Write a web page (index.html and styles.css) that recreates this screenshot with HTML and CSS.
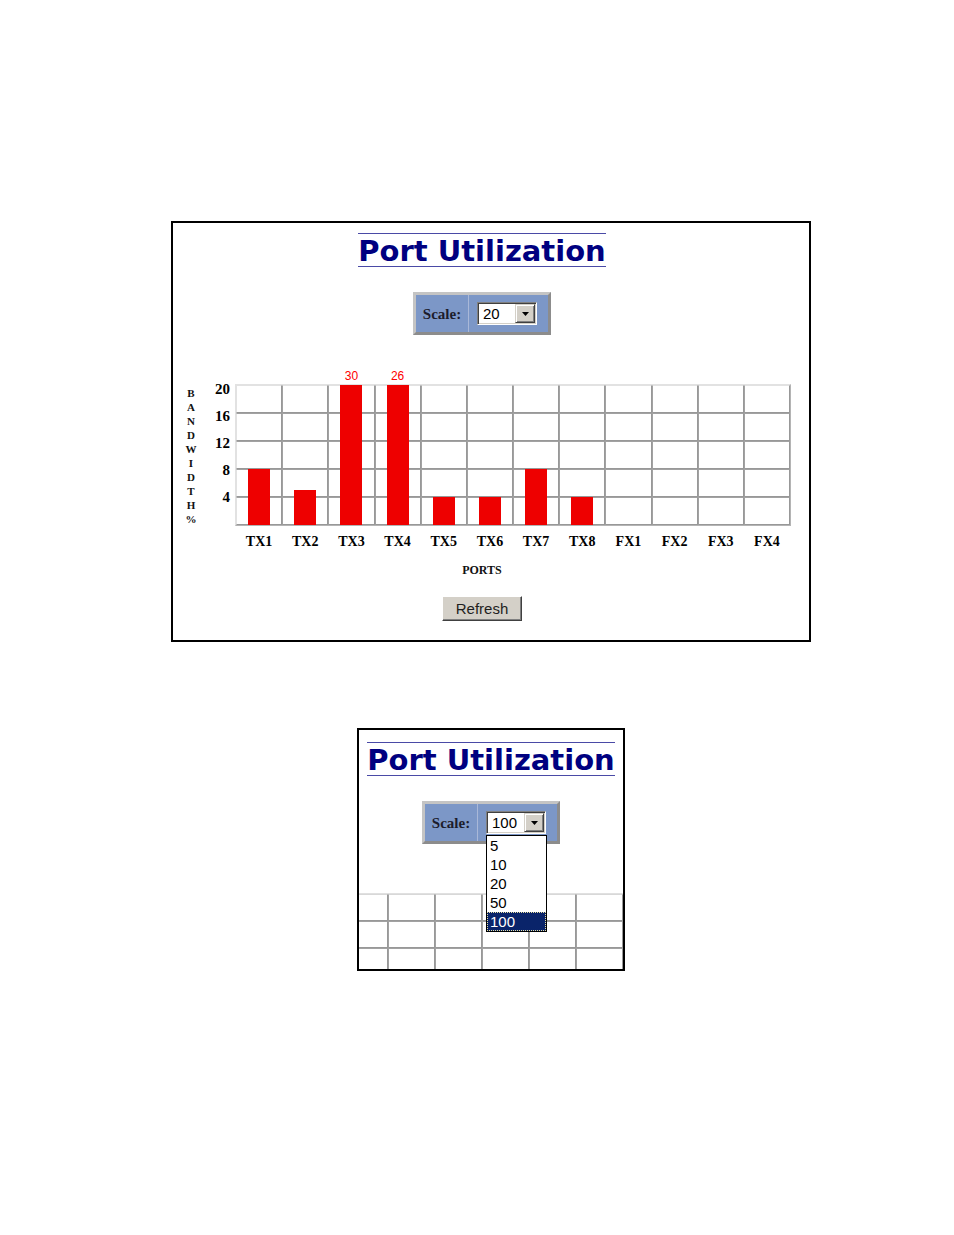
FILE: index.html
```html
<!DOCTYPE html>
<html lang="en">
<head>
<meta charset="utf-8">
<title>Port Utilization</title>
<link rel="stylesheet" href="styles.css">
</head>
<body>
<div class="page">
  <section class="panel panel-main">
    <div class="content">
      <h1 class="title"><span class="title-text">Port Utilization</span></h1>
      <div class="scale">
        <div class="scale-label">Scale:</div>
        <div class="scale-field">
          <div class="combo">
            <span class="combo-value">20</span>
            <span class="combo-btn"><svg width="7" height="4" viewBox="0 0 7 4"><polygon points="0,0 7,0 3.5,4" fill="#000"/></svg></span>
          </div>
        </div>
      </div>
      <div class="chart">
        <div class="values">
          <span></span><span></span><span>30</span><span>26</span><span></span><span></span>
          <span></span><span></span><span></span><span></span><span></span><span></span>
        </div>
        <div class="axis-title">
          <span>B</span><span>A</span><span>N</span><span>D</span><span>W</span><span>I</span><span>D</span><span>T</span><span>H</span><span>%</span>
        </div>
        <div class="ticks">
          <span>20</span><span>16</span><span>12</span><span>8</span><span>4</span>
        </div>
        <div class="plot">
          <div class="grid grid-main">
            <i></i><i></i><i></i><i></i><i></i><i></i><i></i><i></i><i></i><i></i><i></i><i></i>
            <i></i><i></i><i></i><i></i><i></i><i></i><i></i><i></i><i></i><i></i><i></i><i></i>
            <i></i><i></i><i></i><i></i><i></i><i></i><i></i><i></i><i></i><i></i><i></i><i></i>
            <i></i><i></i><i></i><i></i><i></i><i></i><i></i><i></i><i></i><i></i><i></i><i></i>
            <i></i><i></i><i></i><i></i><i></i><i></i><i></i><i></i><i></i><i></i><i></i><i></i>
          </div>
          <div class="bars">
            <span class="bar" style="height:56px"></span>
            <span class="bar" style="height:35px"></span>
            <span class="bar" style="height:140px"></span>
            <span class="bar" style="height:140px"></span>
            <span class="bar" style="height:28px"></span>
            <span class="bar" style="height:28px"></span>
            <span class="bar" style="height:56px"></span>
            <span class="bar" style="height:28px"></span>
            <span class="bar" style="height:0px"></span>
            <span class="bar" style="height:0px"></span>
            <span class="bar" style="height:0px"></span>
            <span class="bar" style="height:0px"></span>
          </div>
        </div>
        <div class="xlabels">
          <span>TX1</span><span>TX2</span><span>TX3</span><span>TX4</span><span>TX5</span><span>TX6</span>
          <span>TX7</span><span>TX8</span><span>FX1</span><span>FX2</span><span>FX3</span><span>FX4</span>
        </div>
      </div>
      <div class="ports">PORTS</div>
      <button class="btn" type="button">Refresh</button>
    </div>
  </section>

  <section class="panel panel-popup">
    <div class="content content-popup">
      <h1 class="title"><span class="title-text">Port Utilization</span></h1>
      <div class="scale">
        <div class="scale-label">Scale:</div>
        <div class="scale-field">
          <div class="combo">
            <span class="combo-value">100</span>
            <span class="combo-btn"><svg width="7" height="4" viewBox="0 0 7 4"><polygon points="0,0 7,0 3.5,4" fill="#000"/></svg></span>
            <ul class="listbox">
              <li>5</li>
              <li>10</li>
              <li>20</li>
              <li>50</li>
              <li class="selected">100</li>
            </ul>
          </div>
        </div>
      </div>
      <div class="grid grid-peek">
        <i></i><i></i><i></i><i></i><i></i><i></i>
        <i></i><i></i><i></i><i></i><i></i><i></i>
        <i></i><i></i><i></i><i></i><i></i><i></i>
      </div>
    </div>
  </section>
</div>
</body>
</html>
```

FILE: styles.css
```css
html, body {
  margin: 0;
  background: #fff;
}
body {
  font-family: "Liberation Serif", "Times New Roman", serif;
  color: #000;
  min-height: 1235px;
}
.page {
  padding-top: 221px;
}
.panel {
  box-sizing: border-box;
  border: 2px solid #000;
  background: #fff;
}
.panel-main {
  margin-left: 171px;
  width: 640px;
  height: 421px;
  padding-right: 18px;
}
.panel-popup {
  margin-left: 357px;
  margin-top: 86px;
  width: 268px;
  height: 243px;
  overflow: hidden;
}
.content {
  display: flex;
  flex-direction: column;
  align-items: center;
}
.title {
  margin: 10px 0 0;
  font: bold 29px/29px "DejaVu Sans", "Verdana", sans-serif;
  color: #000080;
}
.content-popup .title {
  margin-top: 12px;
}
.title-text {
  display: inline-block;
  padding-top: 3px;
  border-top: 1px solid #4a4aa6;
  border-bottom: 1px solid #4a4aa6;
}

/* scale control */
.scale {
  margin-top: 25px;
  display: flex;
  box-sizing: border-box;
  height: 43px;
  border: 3px solid;
  border-color: #c4c4c4 #8c8c8c #8c8c8c #c4c4c4;
  background: #7c97c7;
}
.scale-label {
  width: 52px;
  display: flex;
  align-items: center;
  justify-content: center;
  font: bold 15px/18px "Liberation Serif", serif;
  color: #1c1c2c;
  padding-top: 1px;
}
.scale-field {
  box-sizing: border-box;
  width: 80px;
  border-left: 1px solid #a9b8d8;
  padding: 7px 0 0 8px;
}
.combo {
  position: relative;
  box-sizing: border-box;
  width: 60px;
  height: 23px;
  display: flex;
  background: #fff;
  border: 1px solid;
  border-color: #808080 #ffffff #ffffff #808080;
  box-shadow: inset 1px 1px 0 #404040, inset -1px -1px 0 #d4d0c8;
  padding: 1px;
}
.combo-value {
  flex: 1;
  font: 15px/19px "Liberation Sans", Arial, sans-serif;
  padding-left: 4px;
  color: #000;
}
.combo-btn {
  box-sizing: border-box;
  width: 20px;
  height: 19px;
  background: #d4d0c8;
  border: 1px solid;
  border-color: #d4d0c8 #404040 #404040 #d4d0c8;
  box-shadow: inset 1px 1px 0 #fff, inset -1px -1px 0 #808080;
  display: flex;
  align-items: center;
  justify-content: center;
}
.listbox {
  position: absolute;
  top: calc(100% + 2px);
  left: -1px;
  width: 61px;
  box-sizing: border-box;
  margin: 0;
  padding: 0;
  list-style: none;
  background: #fff;
  border: 1px solid #000;
  z-index: 2;
}
.listbox li {
  height: 19px;
  font: 15px/19px "Liberation Sans", Arial, sans-serif;
  padding-left: 3px;
  color: #000;
}
.listbox li.selected {
  background: #0a246a;
  color: #fff;
  outline: 1px dotted #e8e0a0;
  outline-offset: -1px;
}

/* chart */
.chart {
  margin-top: 34px;
  box-sizing: border-box;
  width: 618px;
  padding-left: 8px;
  display: grid;
  grid-template-columns: 20px 34px 556px;
  grid-template-rows: 15px auto auto;
}
.values {
  grid-column: 3;
  grid-row: 1;
  display: grid;
  grid-template-columns: repeat(12, 1fr);
  padding: 0 1px;
  font: 12px/15px "Liberation Sans", Arial, sans-serif;
  color: #ff0000;
  text-align: center;
}
.axis-title {
  grid-column: 1;
  grid-row: 2;
  margin-top: 2px;
  display: flex;
  flex-direction: column;
  align-items: center;
  font: bold 11px/14px "Liberation Serif", serif;
  color: #111;
}
.ticks {
  grid-column: 2;
  grid-row: 2;
  margin-top: -3px;
  padding-right: 5px;
  display: flex;
  flex-direction: column;
  align-items: flex-end;
  font: bold 15px/16px "Liberation Serif", serif;
}
.ticks span {
  height: 27px;
}
.plot {
  grid-column: 3;
  grid-row: 2;
  display: grid;
  border: 1px solid;
  border-color: #e2e2e2 #b4b4b4 #b4b4b4 #e2e2e2;
}
.plot > .grid,
.plot > .bars {
  grid-area: 1 / 1;
}
.grid {
  display: grid;
}
.grid i {
  display: block;
  border: 1px solid;
  border-color: #a2a2a2 #989898 #989898 #a2a2a2;
}
.grid-main {
  grid-template-columns: repeat(12, 1fr);
  grid-template-rows: repeat(5, 28px);
}
.grid-main i:nth-child(-n+12) {
  border-top-color: #e2e2e2;
}
.grid-main i:nth-child(12n+1) {
  border-left-color: #e2e2e2;
}
.bars {
  display: grid;
  grid-template-columns: repeat(12, 1fr);
  align-items: end;
  justify-items: center;
}
.bar {
  display: block;
  width: 22px;
  background: #ee0000;
}
.xlabels {
  grid-column: 3;
  grid-row: 3;
  margin-top: 8px;
  padding: 0 1px;
  display: grid;
  grid-template-columns: repeat(12, 1fr);
  text-align: center;
  font: bold 14px/16px "Liberation Serif", serif;
}
.ports {
  margin-top: 13px;
  font: bold 12px/14px "Liberation Serif", serif;
  color: #111;
}
.btn {
  margin-top: 19px;
  box-sizing: border-box;
  width: 80px;
  height: 25px;
  padding: 0;
  font: 15px/19px "Liberation Sans", Arial, sans-serif;
  color: #1e1e1e;
  background: #d4d0c8;
  border: 1px solid;
  border-color: #ffffff #404040 #404040 #ffffff;
  box-shadow: inset -1px -1px 0 #808080;
}

/* grid peeking below the popup */
.grid-peek {
  align-self: flex-start;
  margin-left: -18px;
  margin-top: 49px;
  border-top: 1px solid #e0e0e0;
  grid-template-columns: repeat(6, 47px);
  grid-template-rows: repeat(3, 27px);
}
.grid-peek i:nth-child(-n+6) {
  border-top-color: #d8d8d8;
}
```
